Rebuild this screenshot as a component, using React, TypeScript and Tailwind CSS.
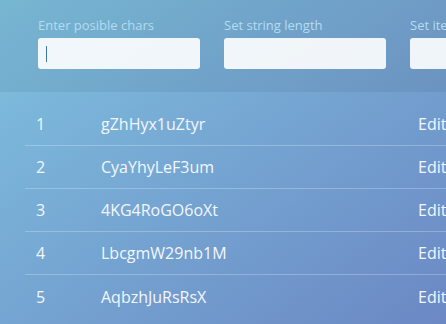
const rows = [
  "gZhHyx1uZtyr",
  "CyaYhyLeF3um",
  "4KG4RoGO6oXt",
  "LbcgmW29nb1M",
  "AqbzhJuRsRsX",
];

const fields = ["Enter posible chars", "Set string length", "Set items count"];

export default function App() {
  return (
    <div className="w-[446px] h-[324px] overflow-hidden bg-gradient-to-br from-[#7fc2df] to-[#6b88c4] font-['Open_Sans',sans-serif]">
      <header className="bg-black/[0.06] pt-[16px] pb-[23px] pl-[38px]">
        <div className="flex gap-[24px]">
          {fields.map((label, i) => (
            <label key={label} className="w-[162px] shrink-0 flex flex-col">
              <span className="text-[13px] leading-[18px] text-[#b4dcf1] mb-[4px] whitespace-nowrap">
                {label}
              </span>
              <div className="relative h-[31px] rounded-[3px] bg-white/90">
                {i === 0 && (
                  <span className="absolute left-[8px] top-[8px] w-px h-[16px] bg-[#3f76a6]" />
                )}
              </div>
            </label>
          ))}
        </div>
      </header>
      <div className="pt-[11px] pl-[25px]">
        {rows.map((s, i) => (
          <div
            key={s}
            className={`flex items-center h-[43px] pl-[11px] text-[16px] text-[#f2f7fc] whitespace-nowrap ${
              i < rows.length - 1 ? "border-b border-white/25" : ""
            }`}
          >
            <span className="w-[65px] shrink-0">{i + 1}</span>
            <span className="w-[317px] shrink-0">{s}</span>
            <span>Edit</span>
          </div>
        ))}
      </div>
    </div>
  );
}
